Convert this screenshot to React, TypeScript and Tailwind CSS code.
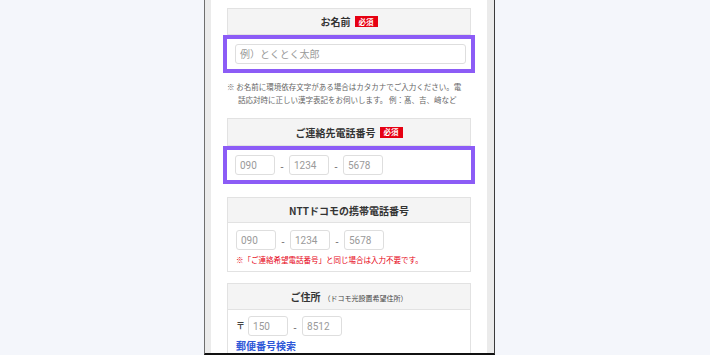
const font = "font-['Noto_Sans_CJK_JP','Noto_Sans',sans-serif]";

function Badge() {
  return (
    <span className="inline-flex h-[11px] items-center bg-[#e60012] px-[4px] text-[7.5px] font-bold leading-none text-white">
      必須
    </span>
  );
}

function Box({ text, w = 'w-[40px]' }: { text: string; w?: string }) {
  return (
    <div
      className={`${w} flex h-[20px] items-center rounded-[3px] border border-[#dedede] bg-white px-[4px] font-['Roboto','Noto_Sans_CJK_JP',sans-serif] text-[10px] text-[#9a9a9a]`}
    >
      {text}
    </div>
  );
}

function Dash() {
  return <span className="w-[14px] text-center text-[10px] text-[#555]">-</span>;
}

function PhoneRow() {
  return (
    <div className="flex items-center">
      <Box text="090" />
      <Dash />
      <Box text="1234" />
      <Dash />
      <Box text="5678" />
    </div>
  );
}

function Header({ children, h = 'h-[27px]' }: { children: React.ReactNode; h?: string }) {
  return (
    <div
      className={`${h} flex items-center justify-center gap-[4px] border-b border-[#e2e2e2] bg-[#f4f4f4] text-[10px] font-bold text-[#333]`}
    >
      {children}
    </div>
  );
}

export default function App() {
  return (
    <div className={`flex h-[355px] w-[710px] overflow-hidden bg-[#f4f6fb] ${font}`}>
      <div className="ml-[204px] flex h-[355px] w-[291px] border-b-2 border-l border-r border-b-[#111] border-l-[#6e6e6e] border-r-[#3a3a3a] bg-[#ebebeb] pl-[6px] pr-[7px]">
        <div className="flex flex-1 flex-col overflow-hidden bg-white px-[16px] pt-[8px]">
          {/* お名前 */}
          <div className="border-x border-t border-[#e2e2e2]">
            <Header h="h-[26px]">
              お名前 <Badge />
            </Header>
          </div>
          <div className="-mx-[4px] border-4 border-[#8c5cf6] bg-white py-[5px] pl-[8px] pr-[5px]">
            <Box text="例）とくとく太郎" w="w-full" />
          </div>
          <div className="mt-[7px] text-[7.5px] leading-[13px] text-[#666]">
            <div className="whitespace-nowrap">※ お名前に環境依存文字がある場合はカタカナでご入力ください。電</div>
            <div className="whitespace-nowrap pl-[11px]">話応対時に正しい漢字表記をお伺いします。 例：髙、吉、﨑など</div>
          </div>

          {/* ご連絡先電話番号 */}
          <div className="mt-[12px] border-x border-t border-[#e2e2e2]">
            <Header h="h-[27px]">
              ご連絡先電話番号 <Badge />
            </Header>
          </div>
          <div className="-mx-[4px] border-4 border-[#8c5cf6] bg-white py-[5px] pl-[8px]">
            <PhoneRow />
          </div>

          {/* NTTドコモ */}
          <div className="mt-[13px] border border-[#e2e2e2]">
            <Header h="h-[25px]">NTTドコモの携帯電話番号</Header>
            <div className="px-[8px] pb-[6px] pt-[7px]">
              <PhoneRow />
              <div className="mt-[4px] text-[7.5px] leading-[11px] text-[#e60012]">
                ※「ご連絡希望電話番号」と同じ場合は入力不要です。
              </div>
            </div>
          </div>

          {/* ご住所 */}
          <div className="mt-[11px] border border-[#e2e2e2]">
            <Header h="h-[26px]">
              <span>
                ご住所<span className="ml-[3px] text-[7px] font-normal text-[#444]">（ドコモ光設置希望住所）</span>
              </span>
            </Header>
            <div className="px-[8px] pt-[6px]">
              <div className="flex items-center">
                <span className="mr-[3px] text-[9px] font-bold text-[#444]">〒</span>
                <Box text="150" />
                <Dash />
                <Box text="8512" />
              </div>
              <div className="mt-[3px] text-[10px] font-bold leading-[14px] text-[#2f58d8]">郵便番号検索</div>
            </div>
          </div>
        </div>
      </div>
    </div>
  );
}
